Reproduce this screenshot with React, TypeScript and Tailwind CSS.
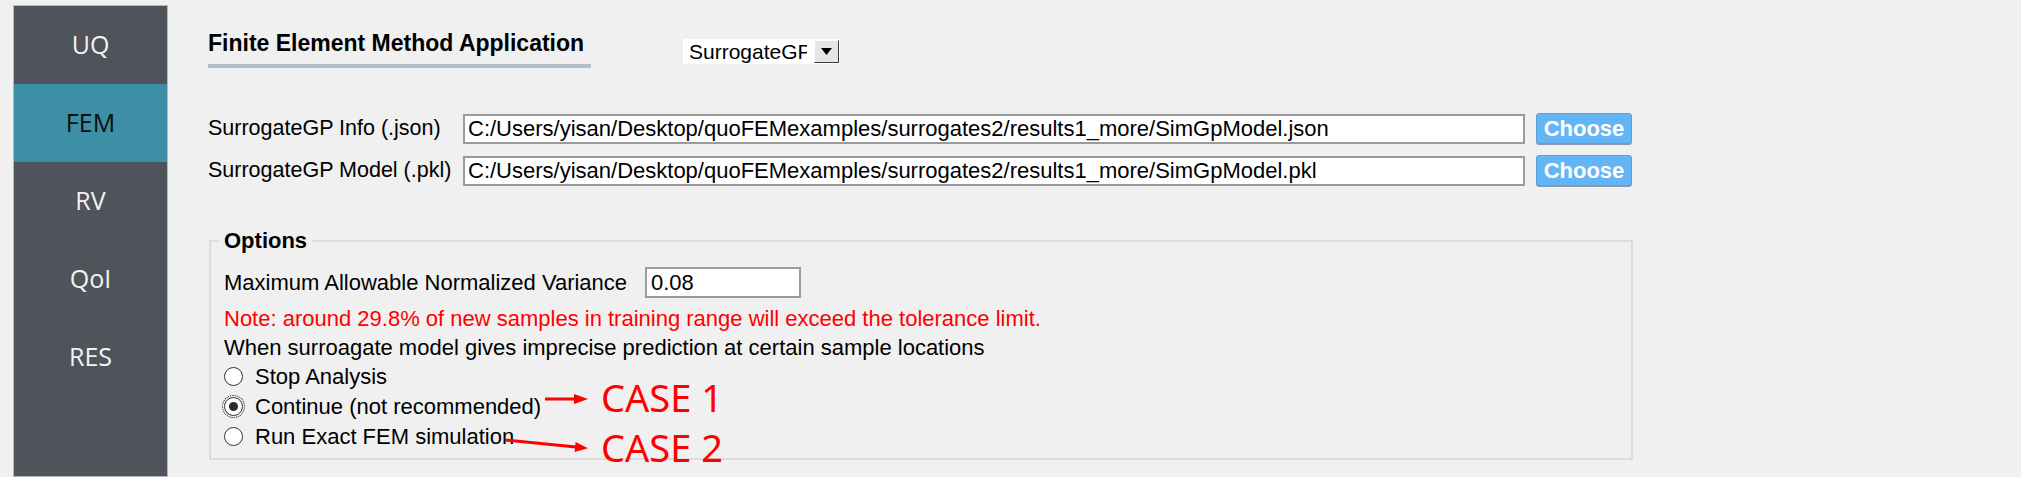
import React from "react";

const navItems = [
  { label: "UQ", active: false },
  { label: "FEM", active: true },
  { label: "RV", active: false },
  { label: "QoI", active: false },
  { label: "RES", active: false },
];

const jsonPath =
  "C:/Users/yisan/Desktop/quoFEMexamples/surrogates2/results1_more/SimGpModel.json";
const pklPath =
  "C:/Users/yisan/Desktop/quoFEMexamples/surrogates2/results1_more/SimGpModel.pkl";

function Radio({ label, checked }: { label: string; checked?: boolean }) {
  return (
    <div className="flex h-full items-center">
      <span
        className={
          "flex h-[19px] w-[19px] items-center justify-center rounded-full border border-[#333] bg-white" +
          (checked ? " outline-1 outline-dotted outline-offset-[1px] outline-[#222]" : "")
        }
      >
        {checked && <span className="h-[9px] w-[9px] rounded-full bg-[#2b2b2b]" />}
      </span>
      <span className="ml-[12px]">{label}</span>
    </div>
  );
}

function PathRow({ label, value, className }: { label: string; value: string; className?: string }) {
  return (
    <div className={"flex h-[31px] items-center " + (className ?? "")}>
      <span className="w-[255px] text-[21.5px] whitespace-nowrap">{label}</span>
      <div className="flex h-[30px] w-[1062px] items-center border-2 border-[#9a9a9a] bg-white pl-[3px] whitespace-nowrap">
        {value}
      </div>
      <button className="ml-[11px] flex h-[31px] w-[96px] items-center justify-center rounded-[3px] border border-[#5aa2dc] bg-[#64b5f6] font-bold text-white shadow-[0_1px_0_#8a9bb0]">
        Choose
      </button>
    </div>
  );
}

export default function App() {
  return (
    <div className="relative h-[494px] w-[2021px] overflow-hidden bg-white font-['Liberation_Sans',Arial,sans-serif] text-[22px] text-black">
      <div className="flex h-[477px] bg-[#f0f0f0]">
        {/* side nav */}
        <nav className="mt-[5px] ml-[13px] flex w-[155px] flex-col border border-[#b4b8bc] bg-[#4f535a] font-['Open_Sans','Noto_Sans',sans-serif]">
          {navItems.map((item) => (
            <div
              key={item.label}
              className={
                "flex h-[78px] items-center justify-center text-[25px] " +
                (item.active ? "bg-[#3d8fa5] text-[#0d0d0d]" : "text-[#f2f2f2]")
              }
            >
              {item.label}
            </div>
          ))}
        </nav>

        <main className="ml-[40px] flex flex-col pt-[30px]">
          {/* header */}
          <div className="flex items-start">
            <div className="flex w-[383px] flex-col">
              <h1 className="text-[23px] leading-[26px] font-bold whitespace-nowrap">Finite Element Method Application</h1>
              <div className="mt-[8px] h-[4px] w-[383px] bg-[#b3bfc7]" />
            </div>
            {/* combo box: the reference shows its text clipped */}
            <div className="mt-[9px] ml-[92px] flex h-[25px] w-[157px] bg-white">
              <div className="w-[124px] overflow-hidden pl-[6px] text-[21px] leading-[25px] whitespace-nowrap">
                SurrogateGP
              </div>
              <div className="mt-[1px] ml-[7px] flex h-[23px] w-[25px] items-center justify-center border border-t-white border-r-[#3c3c3c] border-b-[#3c3c3c] border-l-white bg-[#e6e6e6]">
                <svg width="11" height="7" viewBox="0 0 11 7">
                  <polygon points="0,0 11,0 5.5,7" fill="#000" />
                </svg>
              </div>
            </div>
          </div>

          <PathRow label="SurrogateGP Info (.json)" value={jsonPath} className="mt-[45px]" />
          <PathRow label="SurrogateGP Model (.pkl)" value={pklPath} className="mt-[11px]" />

          {/* options */}
          <fieldset className="mt-[42px] ml-[1px] w-[1424px] border-2 border-[#dcdcdc] pr-[13px] pb-[7px] pl-[13px]">
            <legend className="-ml-[5px] px-[5px] leading-[26px] font-bold">Options</legend>
            <div className="mt-[13px] flex h-[31px] items-center">
              <span className="w-[421px] whitespace-nowrap">Maximum Allowable Normalized Variance</span>
              <div className="flex h-[31px] w-[156px] items-center border-2 border-[#9a9a9a] bg-white pl-[4px]">0.08</div>
            </div>
            <div className="mt-[5px] flex h-[30px] items-center text-[#ff0000]">
              Note: around 29.8% of new samples in training range will exceed the tolerance limit.
            </div>
            <div className="flex h-[29px] items-center">
              When surroagate model gives imprecise prediction at certain sample locations
            </div>
            <div className="h-[29px]">
              <Radio label="Stop Analysis" />
            </div>
            <div className="h-[30px]">
              <Radio label="Continue (not recommended)" checked />
            </div>
            <div className="h-[30px]">
              <Radio label="Run Exact FEM simulation" />
            </div>
          </fieldset>
        </main>
      </div>

      {/* annotations drawn over the screenshot */}
      <svg className="pointer-events-none absolute top-0 left-0" width="2021" height="494">
        <line x1="545" y1="399" x2="576" y2="399" stroke="#ff0000" strokeWidth="3" />
        <polygon points="574,394 588,399 574,404" fill="#ff0000" />
        <line x1="505" y1="440" x2="576" y2="447" stroke="#ff0000" strokeWidth="3" />
        <polygon points="574.6,452 588,448.2 575.6,442" fill="#ff0000" />
      </svg>
      <div className="absolute top-[378px] left-[601px] font-['Noto_Sans',sans-serif] text-[38px] leading-none text-[#ff0000]">
        CASE 1
      </div>
      <div className="absolute top-[428px] left-[601px] font-['Noto_Sans',sans-serif] text-[38px] leading-none text-[#ff0000]">
        CASE 2
      </div>
    </div>
  );
}
